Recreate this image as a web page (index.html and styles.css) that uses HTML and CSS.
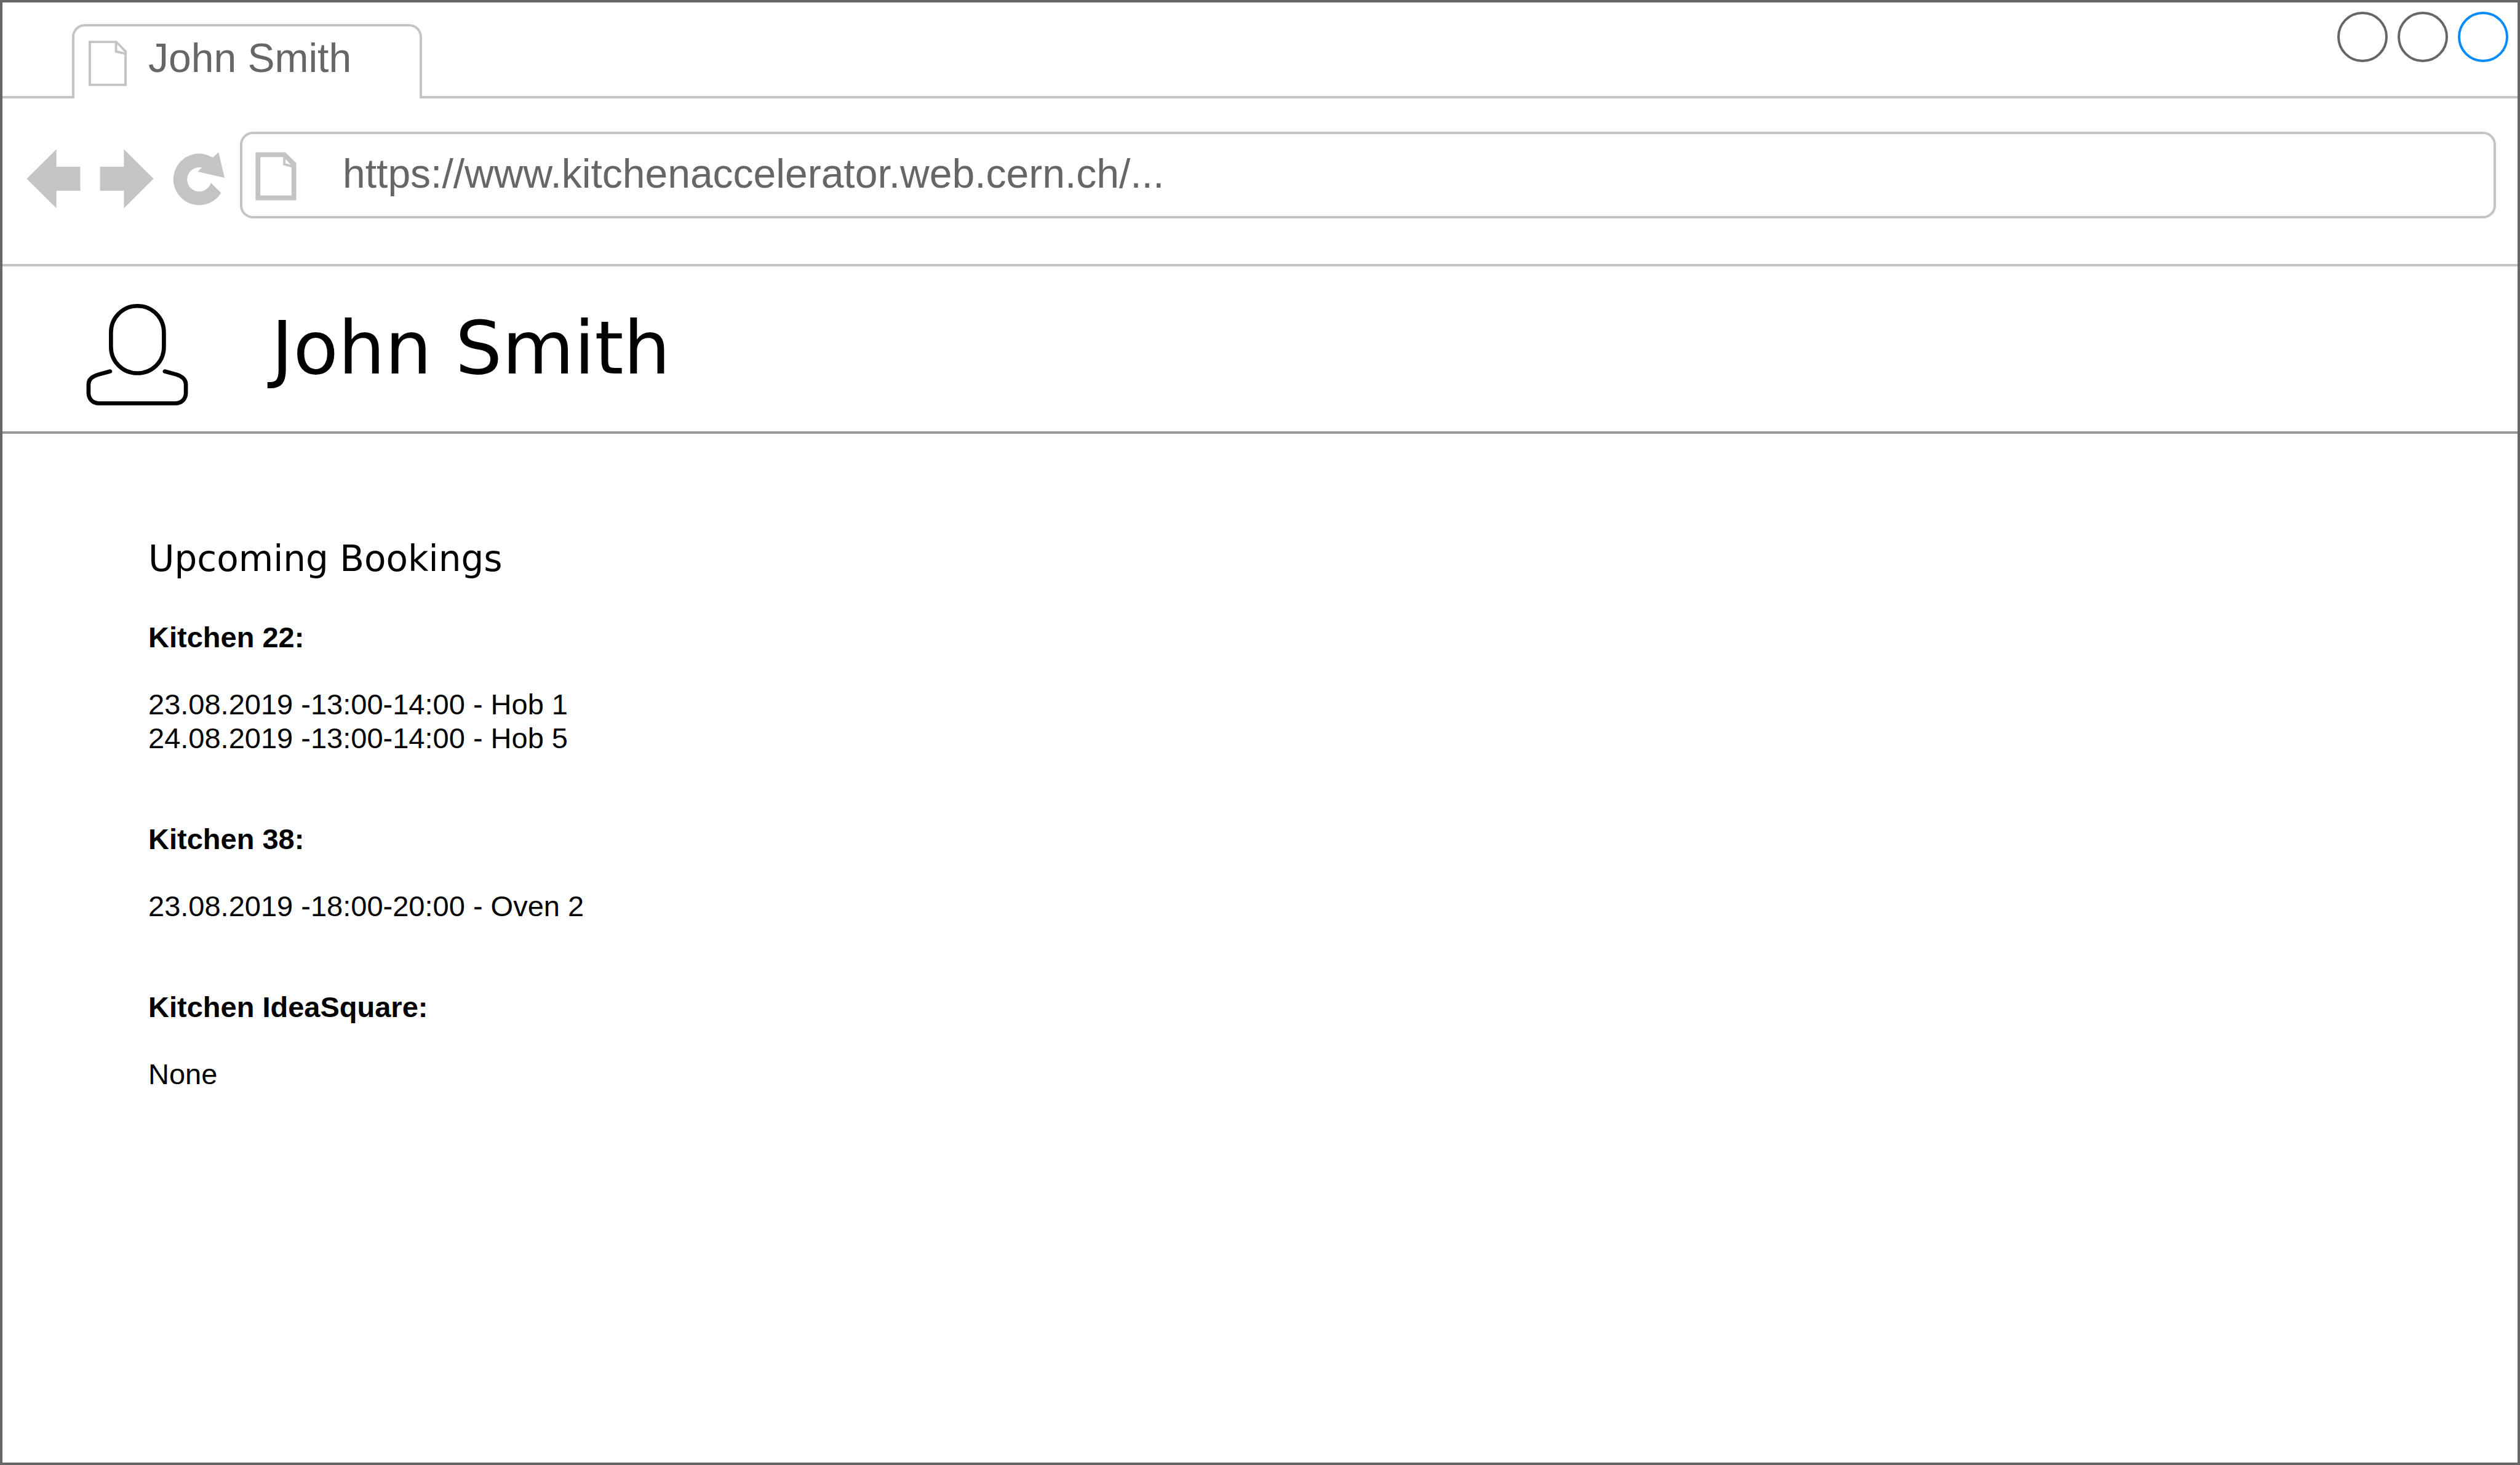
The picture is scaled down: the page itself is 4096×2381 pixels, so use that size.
FILE: index.html
```html
<!DOCTYPE html>
<html lang="en">
<head>
  <meta charset="utf-8">
  <title>John Smith</title>
  <link rel="stylesheet" href="styles.css">
</head>
<body>
  <div class="browser">
    <div class="tab-strip">
      <div class="tab">
        <svg class="tab-icon" viewBox="185 85 80 95" aria-hidden="true">
          <path fill-rule="evenodd" d="M185 85H244L265 106.500V180H185ZM190 90V175H260V114.500L240 109.500V90ZM245 92.500V105.500L261 109.500Z"/>
        </svg>
        <span class="tab-title">John Smith</span>
      </div>
      <div class="window-controls">
        <button class="window-button" type="button" aria-label="Minimize"></button>
        <button class="window-button" type="button" aria-label="Maximize"></button>
        <button class="window-button window-button-close" type="button" aria-label="Close"></button>
      </div>
    </div>

    <div class="toolbar">
      <nav class="history" aria-label="Browser navigation">
        <button class="nav-button" type="button" aria-label="Back">
          <svg class="nav-icon" viewBox="55 310 113 125" aria-hidden="true">
            <path d="M55.400 372.500L117.500 310.600V347.500H167.500V397.500H117.500V434.400Z"/>
          </svg>
        </button>
        <button class="nav-button" type="button" aria-label="Forward">
          <svg class="nav-icon" viewBox="207 310 113 125" aria-hidden="true">
            <path d="M319.600 372.500L257.500 310.600V347.500H207.500V397.500H257.500V434.400Z"/>
          </svg>
        </button>
        <button class="nav-button" type="button" aria-label="Reload">
          <svg class="nav-icon nav-icon-reload" viewBox="360 310 109 125" aria-hidden="true">
            <path d="M460.700 402A54 54 0 1 1 443.300 328L455.400 317L467.900 370.700L411.600 357.700L420.500 349.300A25.300 25.300 0 1 0 439.300 381Z"/>
          </svg>
        </button>
      </nav>
      <div class="address-bar">
        <svg class="address-icon" viewBox="532 317 86 101" aria-hidden="true">
          <path fill-rule="evenodd" d="M532.500 317.500H594.500L617.500 340V417.500H532.500ZM542.500 327.500V407.500H607.500V349L590 344.500V327.500ZM595 331.500V340.500L606 343.500Z"/>
        </svg>
        <input class="address-input" type="text" aria-label="Address" value="https://www.kitchenaccelerator.web.cern.ch/...">
      </div>
    </div>

    <header class="profile">
      <svg class="profile-icon" viewBox="179 633 213 214" aria-hidden="true">
        <path d="M230.800 693.500C230.800 662 256 638.300 286 638.300S341.200 662 341.200 693.500V723.500C341.200 755 316 778.500 286 778.500S230.800 755 230.800 723.500Z"/>
        <path d="M229 774.700L204 781.500C192 785 184 792 184 801.500V820C184 832 193 841.300 205 841.300H366C378 841.300 387 832 387 820V801.500C387 792 379 785 368 781.500L343 774.700"/>
      </svg>
      <h1 class="profile-name">John Smith</h1>
    </header>

    <main class="bookings">
      <h2 class="bookings-title">Upcoming Bookings</h2>
      <div class="kitchens">
        <section class="kitchen">
          <h3 class="kitchen-name">Kitchen 22:</h3>
          <ul class="kitchen-list">
            <li>23.08.2019 -13:00-14:00 - Hob 1</li>
            <li>24.08.2019 -13:00-14:00 - Hob 5</li>
          </ul>
        </section>
        <section class="kitchen">
          <h3 class="kitchen-name">Kitchen 38:</h3>
          <ul class="kitchen-list">
            <li>23.08.2019 -18:00-20:00 - Oven 2</li>
          </ul>
        </section>
        <section class="kitchen">
          <h3 class="kitchen-name">Kitchen IdeaSquare:</h3>
          <ul class="kitchen-list">
            <li>None</li>
          </ul>
        </section>
      </div>
    </main>
  </div>
</body>
</html>
```
FILE: styles.css
```css
:root {
  --frame: #666;
  --line: #c4c4c4;
  --divider: #999;
  --accent: #008cff;
}

* {
  box-sizing: border-box;
  margin: 0;
  padding: 0;
}

body {
  background: #fff;
  color: #000;
  font-family: Arial, "Liberation Sans", sans-serif;
}

svg {
  display: block;
  flex: none;
}

button {
  border: 0;
  background: none;
}

.browser {
  min-height: 100vh;
  border: 4px solid var(--frame);
}

/* Tab strip */
.tab-strip {
  display: flex;
  justify-content: space-between;
  align-items: flex-start;
  padding: 15px 15px 0 113px;
  border-bottom: 4px solid var(--line);
}

.tab {
  display: flex;
  align-items: flex-start;
  gap: 35px;
  width: 569px;
  height: 121px;
  margin: 20px 0 -4px;
  padding: 13px 23px 0;
  border: 4px solid var(--line);
  border-bottom: 0;
  border-radius: 21px 21px 0 0;
  background: #fff;
}

.tab-icon {
  width: 62px;
  height: 74px;
  margin-top: 10px;
  fill: var(--line);
}

.tab-title {
  color: var(--frame);
  font-size: 66px;
  line-height: 76px;
  white-space: nowrap;
}

.window-controls {
  display: flex;
  gap: 16px;
}

.window-button {
  width: 82px;
  height: 82px;
  border: 4px solid var(--frame);
  border-radius: 50%;
}

.window-button-close {
  border-color: var(--accent);
}

/* Toolbar */
.toolbar {
  display: flex;
  align-items: flex-start;
  gap: 24px;
  padding: 54px 35px 74px 39px;
  border-bottom: 4px solid var(--line);
}

.history {
  display: flex;
  gap: 31px;
  padding-top: 28px;
}

.nav-icon {
  width: 88px;
  height: 97px;
  fill: var(--line);
}

.nav-icon-reload {
  width: 85px;
}

.address-bar {
  display: flex;
  flex: 1;
  align-items: flex-start;
  gap: 75px;
  height: 141px;
  padding: 0 21px;
  border: 4px solid var(--line);
  border-radius: 21px;
}

.address-icon {
  width: 67px;
  height: 79px;
  margin-top: 29px;
  fill: var(--line);
}

.address-input {
  flex: 1;
  min-width: 0;
  height: 127px;
  border: 0;
  outline: 0;
  background: none;
  color: var(--frame);
  font: 66px Arial, "Liberation Sans", sans-serif;
}

/* Profile header */
.profile {
  display: flex;
  align-items: flex-start;
  gap: 135px;
  padding: 60px 136px 41px;
  border-bottom: 4px solid var(--divider);
}

.profile-icon {
  width: 166px;
  height: 167px;
  fill: none;
  stroke: #000;
  stroke-width: 8.5;
  stroke-linecap: round;
}

.profile-name {
  font: 120px/146px Verdana, "DejaVu Sans", sans-serif;
}

/* Bookings */
.bookings {
  padding: 168px 237px;
}

.bookings-title {
  margin-bottom: 65px;
  font: 58px/70px Verdana, "DejaVu Sans", sans-serif;
}

.kitchens {
  display: grid;
  gap: 109px;
  font-size: 47px;
  line-height: 55px;
}

.kitchen {
  display: grid;
  gap: 54px;
}

.kitchen-name {
  font-size: 47px;
}

.kitchen-list {
  list-style: none;
}
```
